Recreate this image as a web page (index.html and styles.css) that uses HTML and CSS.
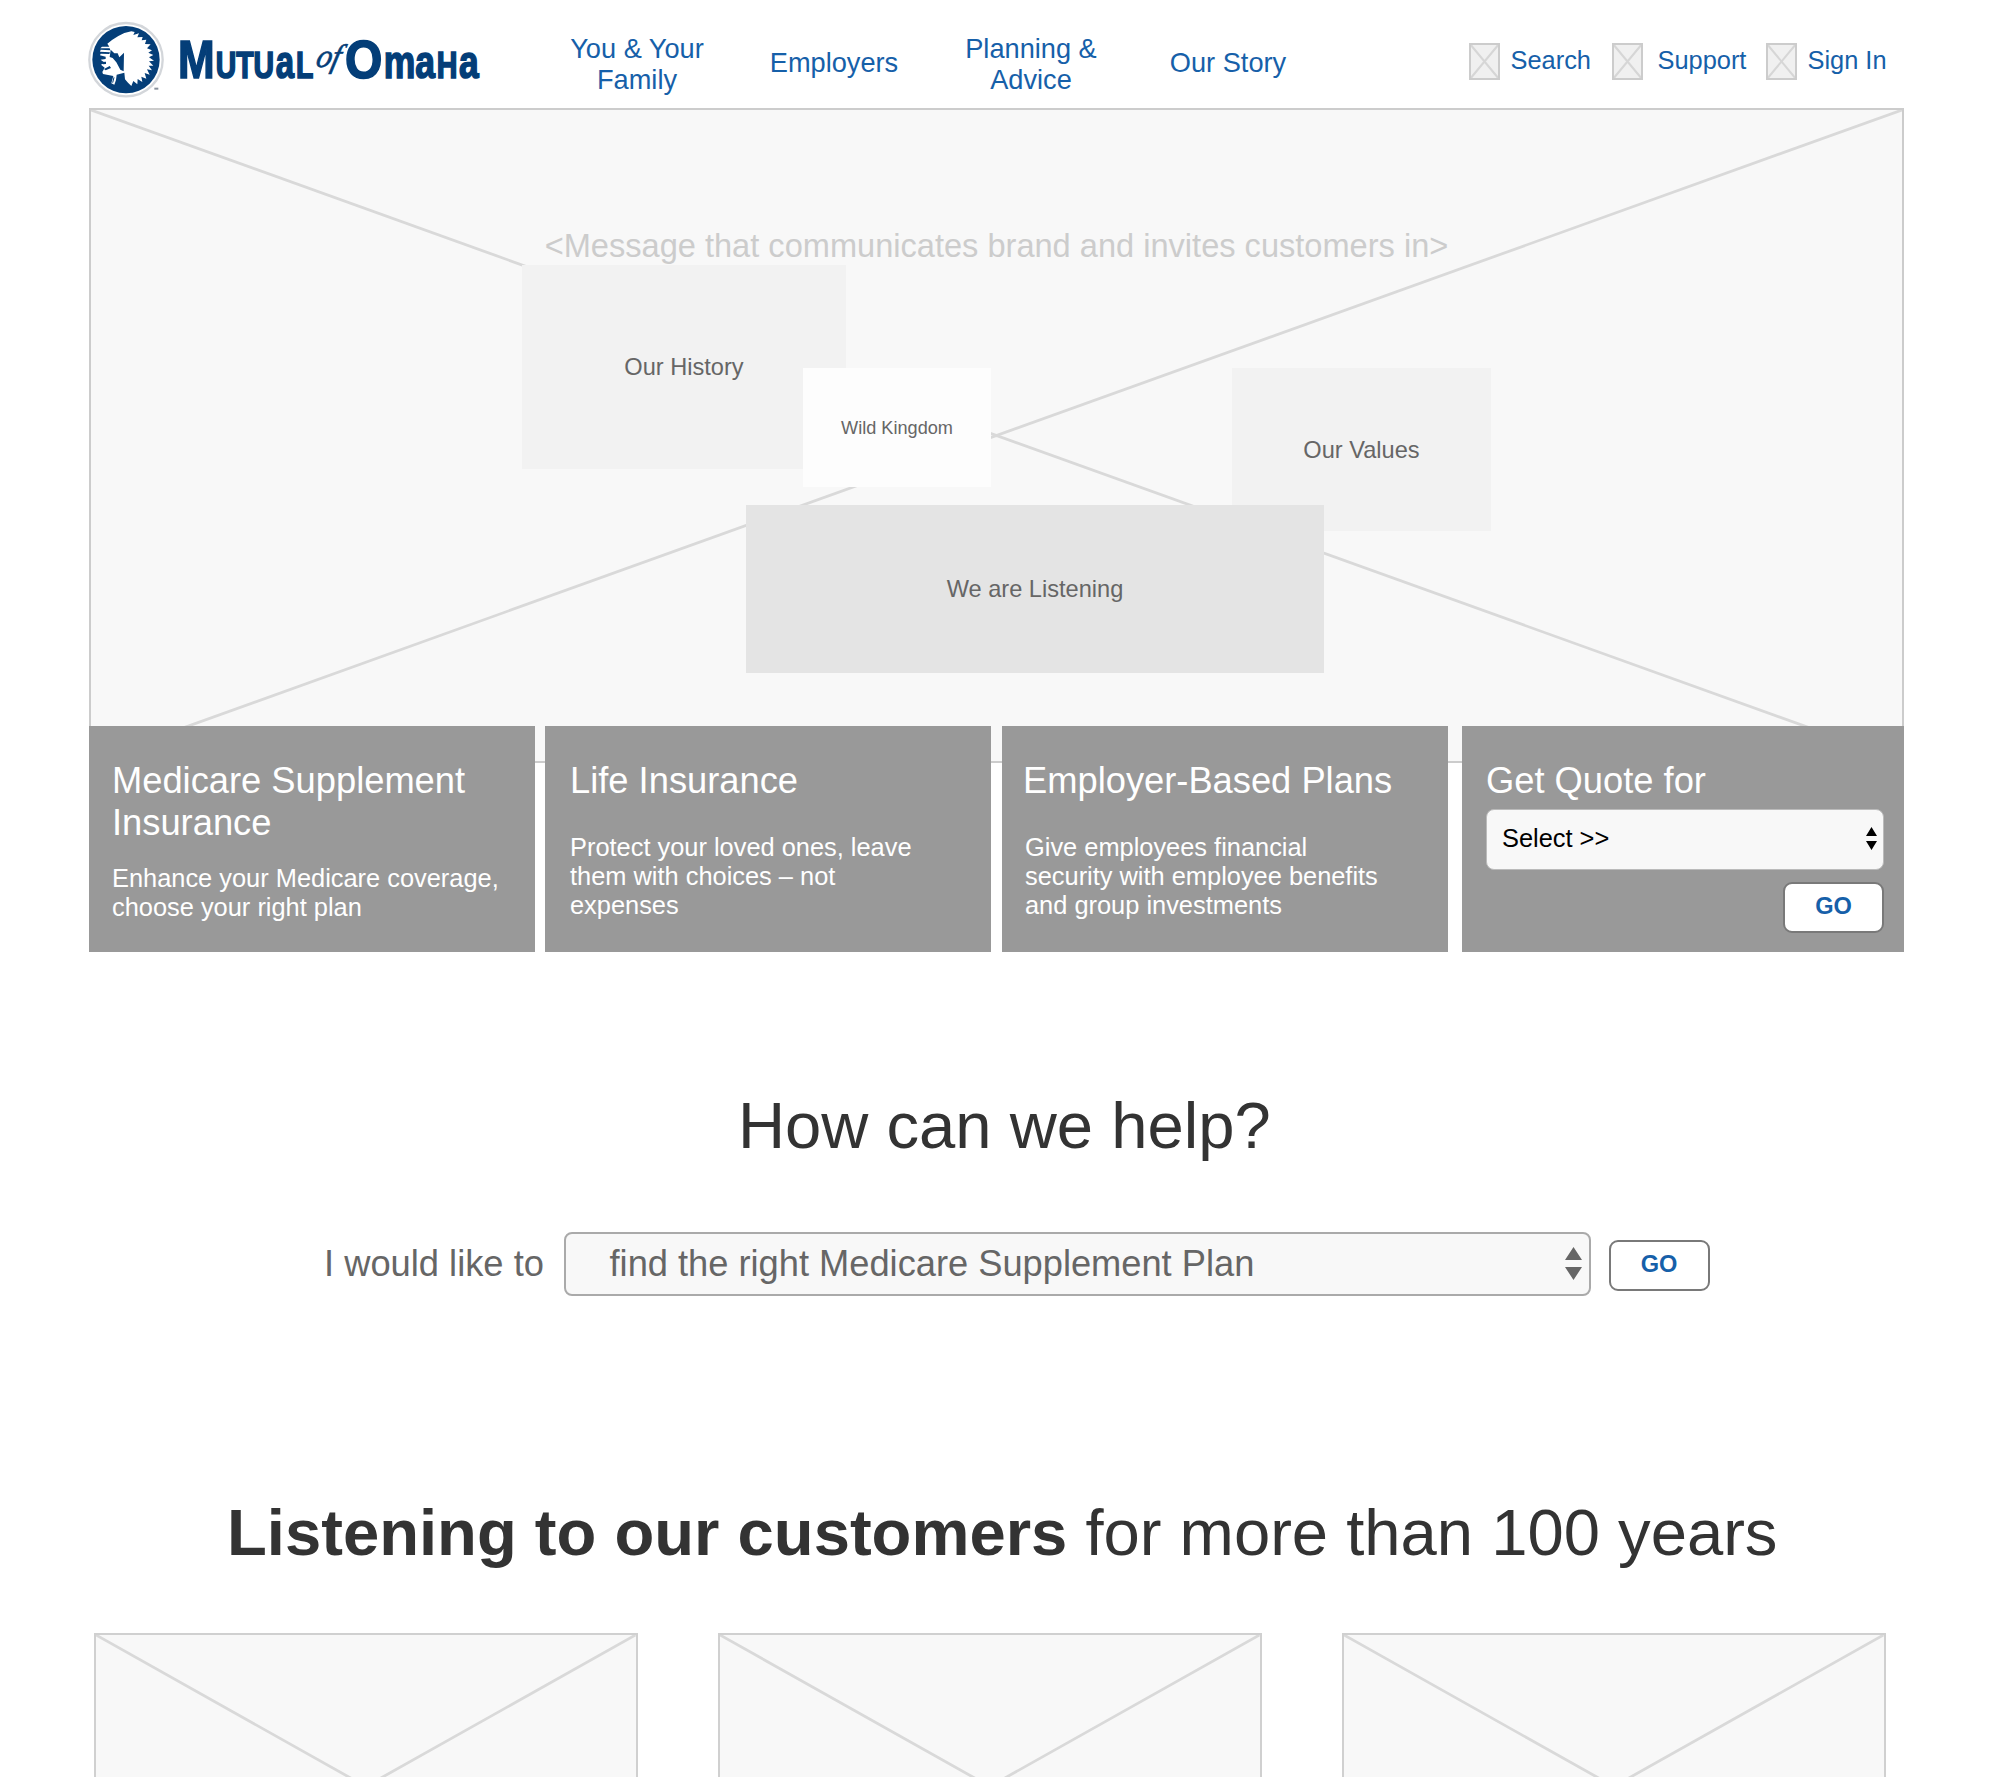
FILE: index.html
```html
<!DOCTYPE html>
<html lang="en">
<head>
<meta charset="utf-8">
<title>Mutual of Omaha</title>
<link rel="stylesheet" href="styles.css">
</head>
<body>
<div class="page">
  <header class="header">
    <a class="logo">
      <svg class="logo-art" viewBox="54 60 1200 240" role="img" aria-label="Mutual of Omaha">
        <circle cx="168" cy="179" r="110" fill="#fff" stroke="#d3d6da" stroke-width="7"/>
        <circle cx="168" cy="179" r="101" fill="#043e78"/>
        <path fill="#fff" d="M112 131 L126 120 L145 108 L163 99 L184 94 L194 96 L190 105 L207 100 L202 112 L218 111 L215 121 L229 119 L225 132 L242 133 L231 145 L246 151 L235 158 L250 165 L237 172 L252 182 L237 184 L250 197 L236 197 L246 211 L231 208 L239 224 L224 219 L229 236 L214 230 L217 246 L203 237 L202 253 L190 243 L184 258 L174 248 L165 238 L163 218 L140 224 L138 240 L133 254 L124 250 L130 228 L99 222 L97 216 L104 203 L93 194 L104 188 L92 179 L107 177 L107 170 L90 166 L92 161 L118 162 L120 157 L90 155 L92 149 L121 151 L119 145 L91 145 L96 140 L118 140 Z"/>
        <path fill="#043e78" d="M122 149 L133 160 L143 160 L148 172 L162 158 L161 214 L151 209 L139 187 L128 174 L119 171 Z M93 186 L108 185 L108 192 L99 193 Z M102 207 L119 198 L123 204 L107 211 Z"/>
        <path d="M132 232 L128 248" stroke="#043e78" stroke-width="3"/>
        <path d="M253 266 H265" stroke="#87909b" stroke-width="6"/>
        <g class="wordmark">
          <text x="324" y="234" font-size="163" textLength="110" lengthAdjust="spacingAndGlyphs">M</text>
          <text x="437" y="234" font-size="108" textLength="175" lengthAdjust="spacingAndGlyphs">UTU</text>
          <text x="617" y="234" font-size="140" textLength="55" lengthAdjust="spacingAndGlyphs">a</text>
          <text x="678" y="234" font-size="108" textLength="52" lengthAdjust="spacingAndGlyphs">L</text>
          <text class="wordmark-of" transform="translate(734 202) skewX(-14)" font-size="98" textLength="72" lengthAdjust="spacingAndGlyphs">of</text>
          <text x="825" y="234" font-size="163" textLength="112" lengthAdjust="spacingAndGlyphs">O</text>
          <text x="941" y="234" font-size="140" textLength="154" lengthAdjust="spacingAndGlyphs">ma</text>
          <text x="1100" y="234" font-size="108" textLength="62" lengthAdjust="spacingAndGlyphs">H</text>
          <text x="1167" y="234" font-size="140" textLength="59" lengthAdjust="spacingAndGlyphs">a</text>
        </g>
      </svg>
    </a>
    <nav class="nav">
      <a>You &amp; Your<br>Family</a>
      <a class="nav-single">Employers</a>
      <a>Planning &amp;<br>Advice</a>
      <a class="nav-single">Our Story</a>
    </nav>
    <div class="tools">
      <a class="tool tool-search"><svg class="placeholder-icon" viewBox="0 0 31 37"><path d="M1 1 L30 36 M30 1 L1 36"/><rect x="1" y="1" width="29" height="35"/></svg>Search</a>
      <a class="tool tool-support"><svg class="placeholder-icon" viewBox="0 0 31 37"><path d="M1 1 L30 36 M30 1 L1 36"/><rect x="1" y="1" width="29" height="35"/></svg>Support</a>
      <a class="tool tool-signin"><svg class="placeholder-icon" viewBox="0 0 31 37"><path d="M1 1 L30 36 M30 1 L1 36"/><rect x="1" y="1" width="29" height="35"/></svg>Sign In</a>
    </div>
  </header>

  <section class="hero">
    <svg class="cross" preserveAspectRatio="none" viewBox="0 0 1815 654"><path d="M0 0 L1815 654 M1815 0 L0 654"/></svg>
    <p class="hero-message">&lt;Message that communicates brand and invites customers in&gt;</p>
    <div class="tile tile-history">Our History</div>
    <div class="tile tile-values">Our Values</div>
    <div class="tile tile-kingdom">Wild Kingdom</div>
    <div class="tile tile-listening">We are Listening</div>
  </section>

  <section class="cards">
    <article class="card card-medicare">
      <h2>Medicare Supplement<br>Insurance</h2>
      <p>Enhance your Medicare coverage,<br>choose your right plan</p>
    </article>
    <article class="card card-life">
      <h2>Life Insurance</h2>
      <p>Protect your loved ones, leave<br>them with choices – not<br>expenses</p>
    </article>
    <article class="card card-employer">
      <h2>Employer-Based Plans</h2>
      <p>Give employees financial<br>security with employee benefits<br>and group investments</p>
    </article>
    <article class="card card-quote">
      <h2>Get Quote for</h2>
      <div class="select select-small">Select &gt;&gt;
        <svg class="arrows-small" viewBox="0 0 11 23"><path d="M5.5 0 L11 9 H0 Z M0 14 H11 L5.5 23 Z"/></svg>
      </div>
      <button class="go">GO</button>
    </article>
  </section>

  <section class="help">
    <h1>How can we help?</h1>
    <div class="help-row">
      <span class="help-label">I would like to</span>
      <div class="select select-large">find the right Medicare Supplement Plan
        <svg class="arrows-large" viewBox="0 0 17 33"><path d="M8.5 0 L17 13 H0 Z M0 20 H17 L8.5 33 Z"/></svg>
      </div>
      <button class="go">GO</button>
    </div>
  </section>

  <section class="stories">
    <h1><b>Listening to our customers</b> for more than 100 years</h1>
    <div class="story-row">
      <div class="story"><svg class="cross" preserveAspectRatio="none" viewBox="0 0 543 307"><path d="M0 0 L543 307 M543 0 L0 307"/></svg></div>
      <div class="story"><svg class="cross" preserveAspectRatio="none" viewBox="0 0 543 307"><path d="M0 0 L543 307 M543 0 L0 307"/></svg></div>
      <div class="story"><svg class="cross" preserveAspectRatio="none" viewBox="0 0 543 307"><path d="M0 0 L543 307 M543 0 L0 307"/></svg></div>
    </div>
  </section>
</div>
</body>
</html>
```
FILE: styles.css
```css
* { box-sizing: border-box; }
body {
  margin: 0;
  background: #fff;
  color: #333;
  font-family: "Liberation Sans", Arial, sans-serif;
}
h1, h2, p { margin: 0; font-weight: 400; white-space: nowrap; }
.page {
  width: 2000px;
  height: 1777px;
  overflow: hidden;
  padding: 0 96px 0 89px;
}

/* Header */
.header { display: flex; height: 108px; margin-left: -1px; }
.logo { width: 450.5px; padding-top: 20px; }
.logo-art { display: block; width: 400px; height: 80px; overflow: visible; }
.wordmark { fill: #043e78; stroke: #043e78; stroke-width: 5; font-weight: 700; }
.wordmark-of { font-family: "Liberation Serif", serif; font-style: italic; font-weight: 400; stroke-width: 2; }
.nav {
  display: grid;
  grid-template-columns: repeat(4, 197px);
  align-items: center;
  height: 127px;
  color: #1660a9;
  font-size: 27.2px;
  line-height: 31px;
  text-align: center;
}
.nav-single { padding-bottom: 2px; }
.tools { display: flex; margin-left: 142.5px; padding-top: 43px; color: #1660a9; font-size: 25.4px; line-height: 34px; }
.tool { display: flex; height: 37px; white-space: nowrap; }
.tool-search { width: 143px; gap: 10.5px; }
.tool-support { width: 154px; gap: 14.5px; }
.tool-signin { gap: 10.5px; }
.placeholder-icon { width: 31px; height: 37px; flex: none; background: #f0f0f0; }
.placeholder-icon path { stroke: #d6d6d6; stroke-width: 2; fill: none; }
.placeholder-icon rect { stroke: #ccc; stroke-width: 2; fill: none; }

/* Hero */
.hero {
  position: relative;
  height: 655px;
  padding-top: 117px;
  border: 2px solid #ccc;
  background: #f8f8f8;
}
.cross { position: absolute; inset: 0; width: 100%; height: 100%; }
.cross path { stroke: #d9d9d9; stroke-width: 2.8; fill: none; }
.hero-message {
  position: relative;
  color: #ccc;
  font-size: 32.6px;
  line-height: 38px;
  text-align: center;
}
.tile {
  position: absolute;
  display: flex;
  align-items: center;
  justify-content: center;
  color: #666;
  font-size: 23.6px;
  background: #f2f2f2;
}
.tile-history { left: 431px; top: 155px; width: 324px; height: 204px; }
.tile-values { left: 1141px; top: 258px; width: 259px; height: 163px; padding-top: 1px; }
.tile-kingdom { left: 712px; top: 258px; width: 188px; height: 119px; padding-top: 2px; background: #fdfdfd; font-size: 18.15px; }
.tile-listening { left: 655px; top: 395px; width: 578px; height: 168px; background: #e4e4e4; }

/* Product cards, overlapping the foot of the hero */
.cards { position: relative; display: flex; height: 226px; margin-top: -37px; }
.card { width: 446px; padding-top: 34px; background: #999; color: #fff; }
.card h2 { font-size: 36.3px; line-height: 41.7px; }
.card p { margin-top: 31.7px; font-size: 25.4px; line-height: 29px; }
.card-medicare { padding-left: 23px; margin-right: 10px; }
.card-medicare p { margin-top: 21px; }
.card-life { padding-left: 25px; margin-right: 11px; }
.card-employer { padding-left: 21px; margin-right: 14px; }
.card-employer p { padding-left: 2px; }
.card-quote { display: flex; flex-direction: column; width: 442px; padding-left: 24px; }

.select {
  display: flex;
  align-items: center;
  justify-content: space-between;
  background: #f8f8f8;
  border-radius: 8px;
  white-space: nowrap;
}
.select-small {
  width: 398px;
  height: 61px;
  margin-top: 7px;
  padding: 0 6px 1px 15px;
  border: 1px solid #bbb;
  color: #000;
  font-size: 25.4px;
}
.arrows-small { width: 11px; height: 23px; fill: #000; }
.select-large {
  width: 1027px;
  height: 64px;
  padding: 0 7px 1px 44px;
  border: 2px solid #aaa;
  color: #666;
  font-size: 36.25px;
}
.arrows-large { width: 17px; height: 33px; fill: #666; }
.go {
  width: 101px;
  height: 51px;
  padding: 0 0 2px;
  border: 2px solid #797979;
  border-radius: 9px;
  background: #fff;
  color: #1660a9;
  font: 700 23.6px "Liberation Sans", Arial, sans-serif;
}
.card .go { width: 101px; margin: 12px 0 0 297px; }

/* Help finder */
.help { padding-top: 136px; }
.help h1 { padding-left: 649px; font-size: 65.2px; line-height: 76px; }
.help-row { display: flex; align-items: center; margin-top: 68px; padding-left: 235px; }
.help-label { width: 239.5px; padding-bottom: 1px; color: #666; font-size: 36.3px; white-space: nowrap; }
.help .go { margin-left: 18px; margin-top: 2px; }

/* Customer stories */
.stories { padding-top: 199px; }
.stories h1 { padding-left: 138px; font-size: 65.2px; line-height: 76px; }
.story-row { display: flex; gap: 80.5px; margin-top: 62px; padding-left: 5px; }
.story { position: relative; flex: none; width: 543.5px; height: 307px; border: 2px solid #d0d0d0; background: #f8f8f8; }
```
